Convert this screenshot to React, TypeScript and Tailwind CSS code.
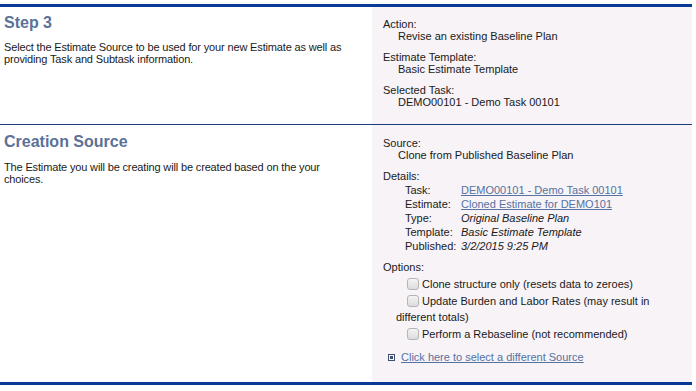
const font = { fontFamily: '"Liberation Sans", Arial, sans-serif' };

function Label({ children }: { children: React.ReactNode }) {
  return <div className="text-[11px] leading-[12px] text-[#1a1a1a]">{children}</div>;
}

function Value({ children }: { children: React.ReactNode }) {
  return <div className="pl-[15px] text-[11px] leading-[12px] text-[#1a1a1a]">{children}</div>;
}

function Box() {
  return (
    <span className="mr-[3px] inline-block h-[12px] w-[12px] rounded-[3px] border border-[#b5b5b5] bg-gradient-to-b from-[#f4f4f4] to-[#dcdcdc] align-[-2px]" />
  );
}

function Check({ children }: { children: React.ReactNode }) {
  return (
    <div className="pl-[24px] text-[11px] leading-[16px] text-[#1a1a1a]">
      <Box />
      {children}
    </div>
  );
}

const details: [string, string, "link" | "italic"][] = [
  ["Task:", "DEMO00101 - Demo Task 00101", "link"],
  ["Estimate:", "Cloned Estimate for DEMO101", "link"],
  ["Type:", "Original Baseline Plan", "italic"],
  ["Template:", "Basic Estimate Template", "italic"],
  ["Published:", "3/2/2015 9:25 PM", "italic"],
];

export default function App() {
  return (
    <div className="h-[391px] w-[696px] bg-white pt-[4px]" style={font}>
      <div className="w-[692px] border-t-[3px] border-b-[3px] border-[#0a3a97]">
        {/* step 3 */}
        <div className="flex h-[118px] border-b border-[#1d3d7c]">
          <div className="w-[372px] px-[4px] pt-[6px]">
            <h2 className="text-[16px] font-bold leading-[20px] text-[#5b7198]">Step 3</h2>
            <p className="mt-[8px] text-[11px] leading-[12px] tracking-[-0.15px] text-[#1a1a1a]">
              Select the Estimate Source to be used for your new Estimate as well as providing Task and Subtask information.
            </p>
          </div>
          <div className="flex flex-1 flex-col gap-[9px] bg-[#f7f3f7] pl-[11px] pt-[11px]">
            <div>
              <Label>Action:</Label>
              <Value>Revise an existing Baseline Plan</Value>
            </div>
            <div>
              <Label>Estimate Template:</Label>
              <Value>Basic Estimate Template</Value>
            </div>
            <div>
              <Label>Selected Task:</Label>
              <Value>DEMO00101 - Demo Task 00101</Value>
            </div>
          </div>
        </div>

        {/* creation source */}
        <div className="flex h-[257px]">
          <div className="w-[372px] px-[4px] pt-[7px]">
            <h2 className="text-[16px] font-bold leading-[20px] text-[#5b7198]">Creation Source</h2>
            <p className="mt-[9px] w-[340px] text-[11px] leading-[12px] tracking-[-0.15px] text-[#1a1a1a]">
              The Estimate you will be creating will be created based on the your choices.
            </p>
          </div>
          <div className="flex-1 bg-[#f7f3f7] pl-[11px] pt-[12px]">
            <Label>Source:</Label>
            <Value>Clone from Published Baseline Plan</Value>

            <div className="mt-[9px]">
              <Label>Details:</Label>
              <div className="mt-[1px] pl-[22px]">
                {details.map(([k, v, kind]) => (
                  <div key={k} className="flex text-[11px] leading-[14px] text-[#1a1a1a]">
                    <span className="w-[56px]">{k}</span>
                    {kind === "link" ? (
                      <span className="text-[#5572a0] underline">{v}</span>
                    ) : (
                      <span className="italic">{v}</span>
                    )}
                  </div>
                ))}
              </div>
            </div>

            <div className="mt-[8px]">
              <Label>Options:</Label>
              <div className="mt-[3px] flex flex-col gap-[1px]">
                <Check>Clone structure only (resets data to zeroes)</Check>
                <div className="pl-[24px] text-[11px] leading-[16px] text-[#1a1a1a]">
                  <Box />
                  Update Burden and Labor Rates (may result in
                  <div className="-ml-[11px]">different totals)</div>
                </div>
                <Check>Perform a Rebaseline (not recommended)</Check>
              </div>
            </div>

            <div className="mt-[8px] flex items-center gap-[6px] pl-[5px] text-[11px] leading-[14px]">
              <span className="flex h-[7px] w-[7px] items-center justify-center border border-[#3d4f6e]">
                <span className="h-[3px] w-[3px] bg-[#3d4f6e]" />
              </span>
              <span className="text-[#5572a0] underline">Click here to select a different Source</span>
            </div>
          </div>
        </div>
      </div>
    </div>
  );
}
